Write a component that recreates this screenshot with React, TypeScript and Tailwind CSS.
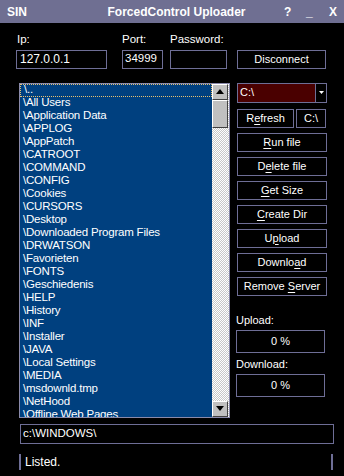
const files = [
  "\\..",
  "\\All Users",
  "\\Application Data",
  "\\APPLOG",
  "\\AppPatch",
  "\\CATROOT",
  "\\COMMAND",
  "\\CONFIG",
  "\\Cookies",
  "\\CURSORS",
  "\\Desktop",
  "\\Downloaded Program Files",
  "\\DRWATSON",
  "\\Favorieten",
  "\\FONTS",
  "\\Geschiedenis",
  "\\HELP",
  "\\History",
  "\\INF",
  "\\Installer",
  "\\JAVA",
  "\\Local Settings",
  "\\MEDIA",
  "\\msdownld.tmp",
  "\\NetHood",
  "\\Offline Web Pages",
];

// label with an underlined accelerator letter
const buttons: [string, number][] = [
  ["Run file", 0],
  ["Delete file", 1],
  ["Get Size", 0],
  ["Create Dir", 0],
  ["Upload", 1],
  ["Download", 6],
  ["Remove Server", 7],
];

const Accel = ({ text, at }: { text: string; at: number }) => (
  <span>
    {text.slice(0, at)}
    <span className="underline underline-offset-2">{text[at]}</span>
    {text.slice(at + 1)}
  </span>
);

const ScrollArrow = ({ up }: { up?: boolean }) => (
  <div className="h-[16px] w-[16px] bg-[#c0c0c0] border border-t-white border-l-white border-r-[#404040] border-b-[#404040] flex items-center justify-center">
    <svg width="8" height="5" viewBox="0 0 8 5">
      <polygon points={up ? "4,0 8,5 0,5" : "0,0 8,0 4,5"} fill="#000" />
    </svg>
  </div>
);

export default function App() {
  return (
    <div
      className="w-[344px] h-[476px] bg-black text-white text-[11px] leading-none overflow-hidden flex flex-col"
      style={{ fontFamily: '"Liberation Sans", Arial, sans-serif' }}
    >
      {/* title bar */}
      <div className="h-[23px] bg-[#6f6f92] flex items-center px-[7px] font-bold text-[12px]">
        <span className="w-[40px]">SIN</span>
        <span className="flex-1 text-center pl-[22px]">ForcedControl Uploader</span>
        <span className="w-[20px]">?</span>
        <span className="w-[25px] pl-[2px]">_</span>
        <span className="w-[8px]">X</span>
      </div>

      {/* connection row */}
      <div className="flex items-end pl-[16px] pt-[11px] text-[11.5px]">
        <div className="flex flex-col gap-[4px] w-[91px]">
          <span className="pl-[1px]">Ip:</span>
          <div className="h-[19px] border border-[#6e6e96] flex items-center pl-[3px] text-[12px]">127.0.0.1</div>
        </div>
        <div className="flex flex-col gap-[4px] w-[41px] ml-[15px]">
          <span>Port:</span>
          <div className="h-[19px] border border-[#6e6e96] flex items-center pl-[2px]">34999</div>
        </div>
        <div className="flex flex-col gap-[4px] w-[57px] ml-[7px]">
          <span>Password:</span>
          <div className="h-[19px] border border-[#6e6e96]" />
        </div>
        <div className="h-[19px] w-[89px] ml-[10px] border border-[#6e6e96] flex items-center justify-center text-[11px]">
          Disconnect
        </div>
      </div>

      {/* main area */}
      <div className="flex pt-[14px] pl-[19px]">
        {/* file list */}
        <div className="w-[211px] h-[335px] border border-[#8a8aaa] bg-[#00407f] flex">
          <div className="flex-1 overflow-hidden flex flex-col">
            {files.map((f, i) => (
              <div
                key={f}
                className={
                  "h-[13px] shrink-0 flex items-center pl-[3px] whitespace-nowrap text-[11.5px] tracking-[-0.2px] " +
                  (i === 0 ? "border border-dotted border-[#e8c070]" : "")
                }
              >
                {f}
              </div>
            ))}
          </div>
          <div className="w-[17px] flex flex-col bg-[repeating-conic-gradient(#c8c8c8_0_25%,#ffffff_0_50%)] bg-[length:2px_2px]">
            <ScrollArrow up />
            <div className="h-[28px] w-[16px] bg-[#c0c0c0] border border-t-white border-l-white border-r-[#404040] border-b-[#404040]" />
            <div className="flex-1" />
            <ScrollArrow />
          </div>
        </div>

        {/* right panel */}
        <div className="ml-[7px] w-[90px] flex flex-col">
          <div className="h-[20px] border border-[#6e6e96] flex">
            <div className="flex-1 bg-[#4a0000] flex items-center pl-[2px]">C:\</div>
            <div className="w-[11px] border-l border-[#6e6e96] flex items-center justify-center">
              <svg width="5" height="3" viewBox="0 0 5 3">
                <polygon points="0,0 5,0 2.5,3" fill="#fff" />
              </svg>
            </div>
          </div>
          <div className="flex mt-[6px] gap-[2px]">
            <div className="h-[19px] w-[57px] border border-[#6e6e96] flex items-center justify-center">
              <Accel text="Refresh" at={1} />
            </div>
            <div className="h-[19px] w-[30px] border border-[#6e6e96] flex items-center justify-center">C:\</div>
          </div>
          <div className="flex flex-col gap-[5px] mt-[5px]">
            {buttons.map(([b, at]) => (
              <div key={b} className="h-[19px] border border-[#6e6e96] flex items-center justify-center">
                <Accel text={b} at={at} />
              </div>
            ))}
          </div>
          <span className="mt-[19px] -ml-[1px]">Upload:</span>
          <div className="mt-[4px] h-[23px] w-[89px] -ml-[1px] border border-[#6e6e96] flex items-center justify-center">0 %</div>
          <span className="mt-[6px] -ml-[1px]">Download:</span>
          <div className="mt-[4px] h-[23px] w-[89px] -ml-[1px] border border-[#6e6e96] flex items-center justify-center">0 %</div>
        </div>
      </div>

      {/* path */}
      <div className="ml-[20px] mt-[6px] w-[314px] h-[20px] border border-[#6e6e96] flex items-center pl-[2px] text-[11.5px]">
        c:\WINDOWS\
      </div>

      {/* status bar */}
      <div className="flex items-center mt-[10px] pl-[19px] h-[16px]">
        <div className="w-[2px] h-[16px] bg-[#6e6e96]" />
        <span className="flex-1 pl-[4px] text-[12px]">Listed.</span>
        <div className="w-[2px] h-[16px] bg-[#6e6e96] mr-[11px]" />
      </div>
    </div>
  );
}
